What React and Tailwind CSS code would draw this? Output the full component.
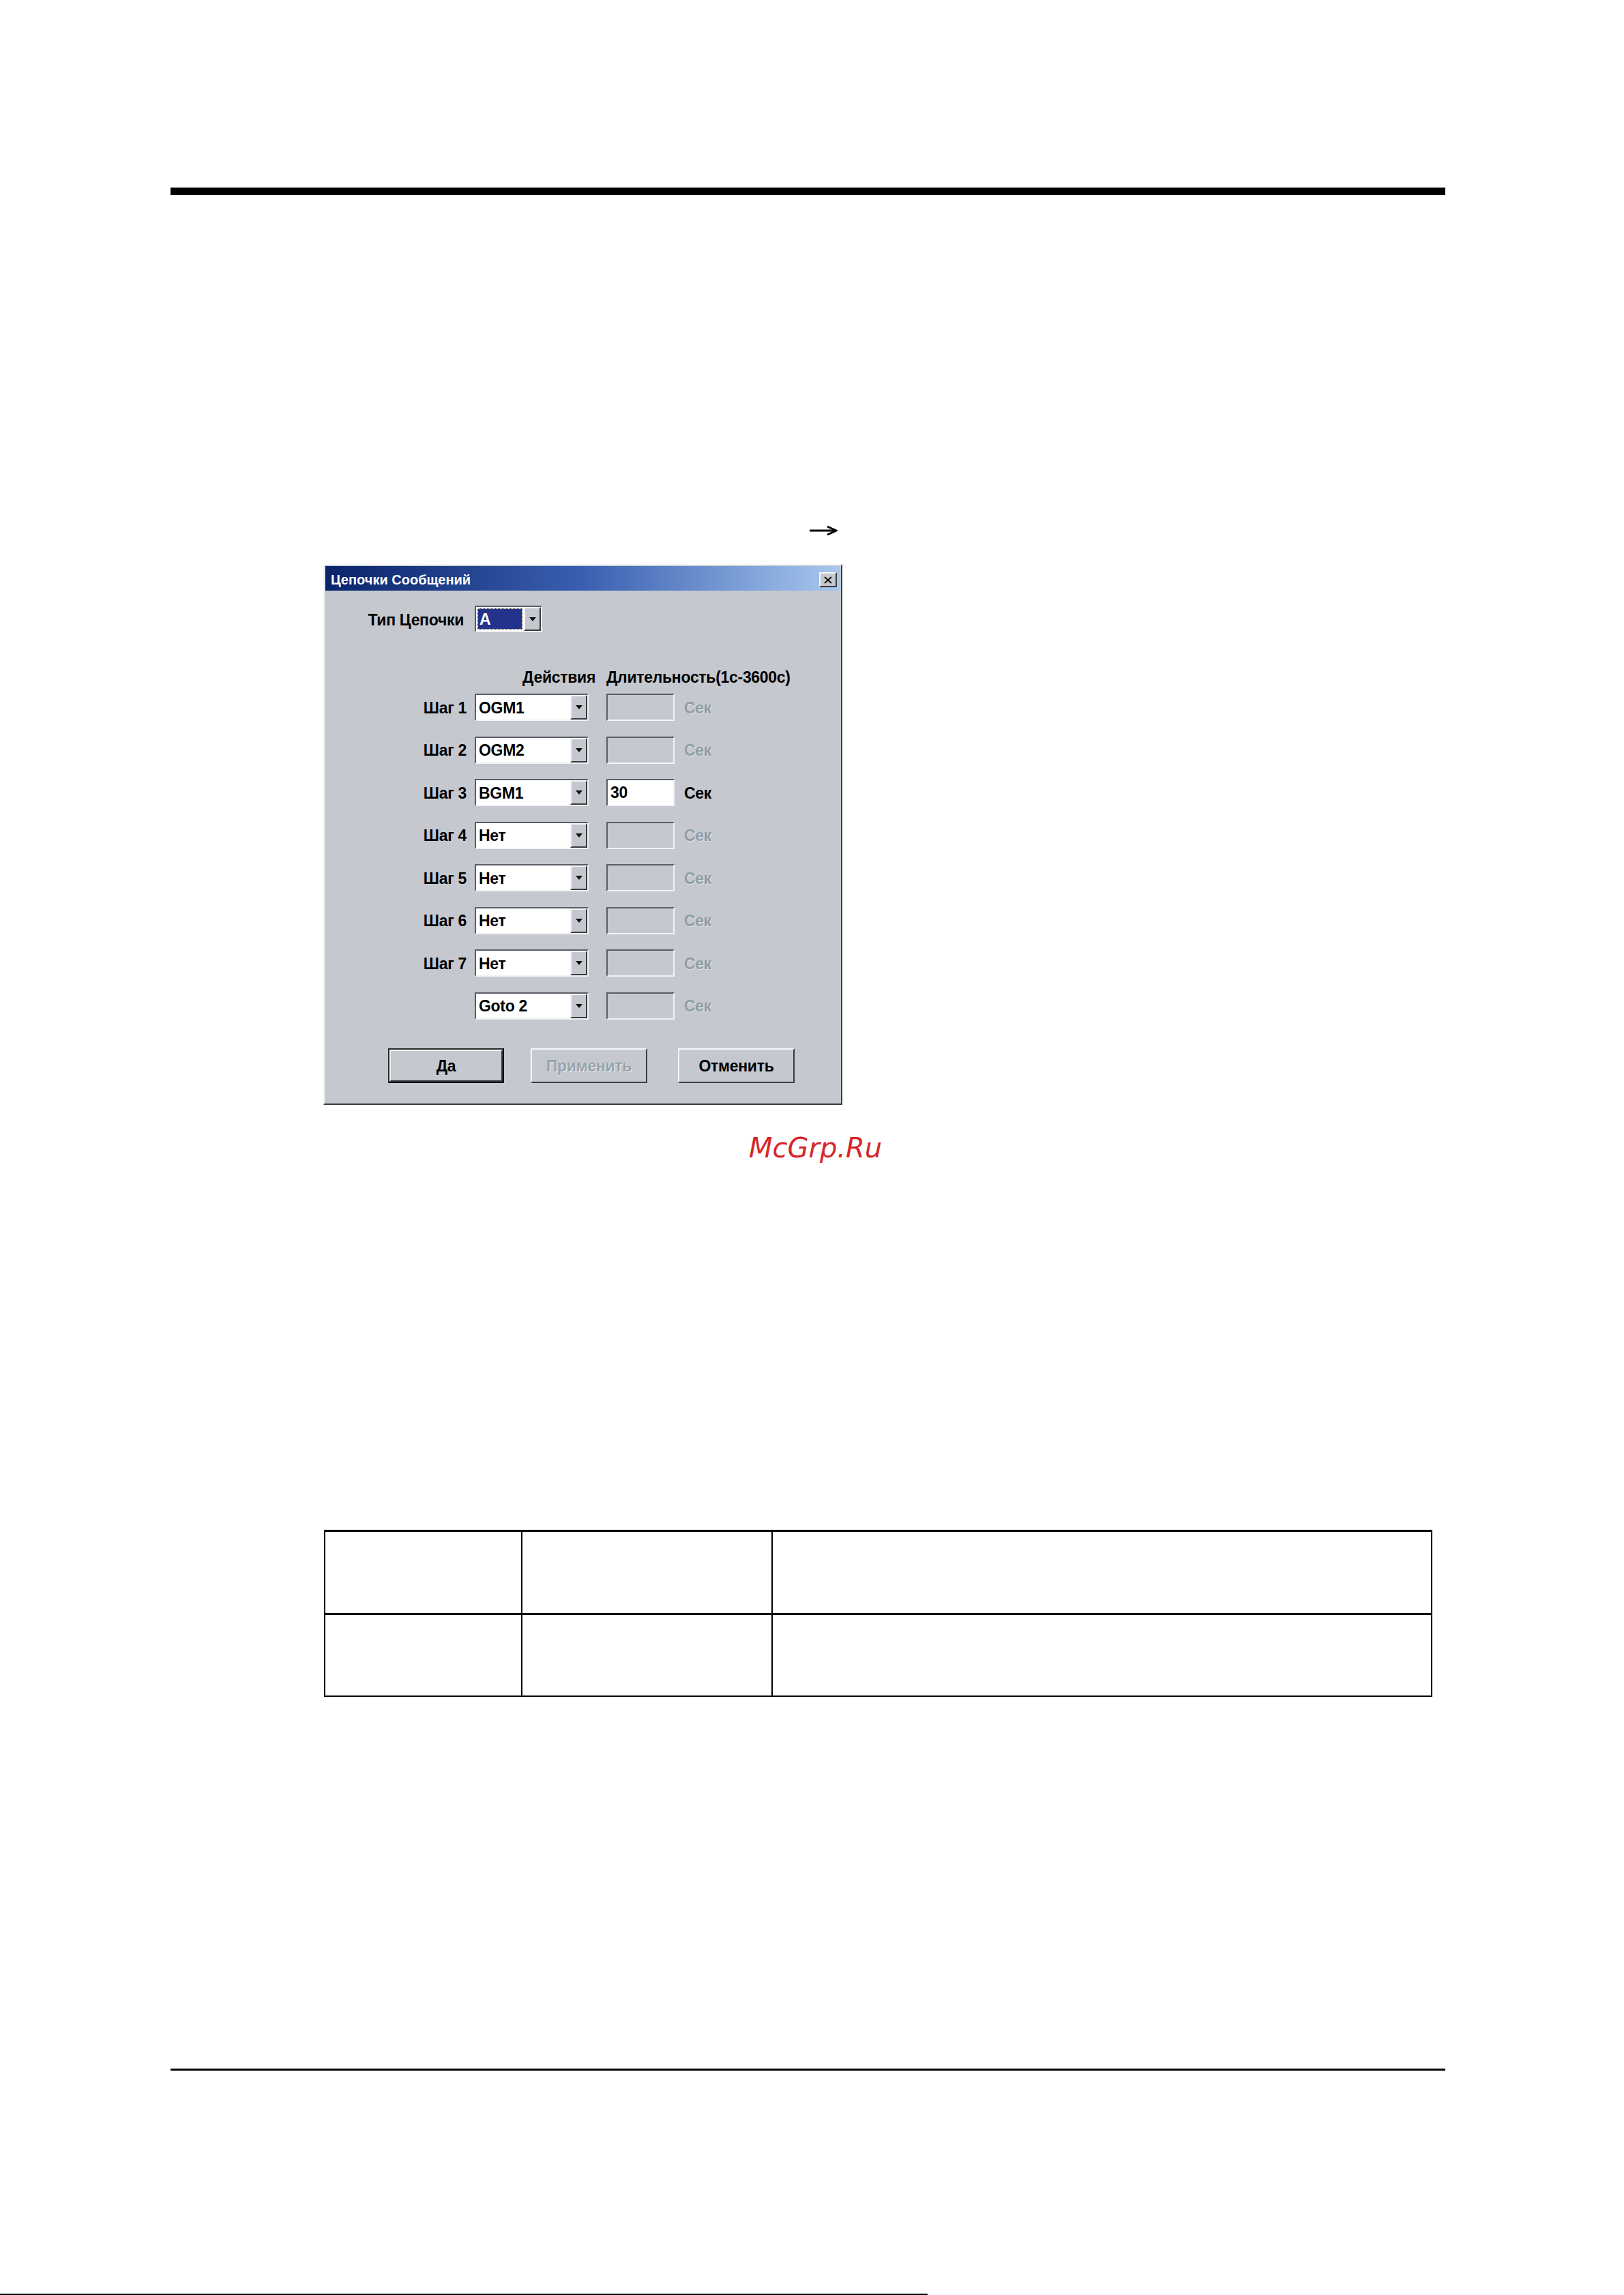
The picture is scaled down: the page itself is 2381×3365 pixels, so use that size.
import React from 'react';

const sunken = 'border-2 border-t-[#5a5e66] border-l-[#5a5e66] border-b-[#f1f2f4] border-r-[#f1f2f4]';
const raised = 'border-2 border-t-[#f4f5f7] border-l-[#f4f5f7] border-b-[#3a3c40] border-r-[#3a3c40]';
const uiText = 'text-[23px] font-bold leading-none tracking-[-0.3px]';

const steps = [
  { label: 'Шаг 1', action: 'OGM1' },
  { label: 'Шаг 2', action: 'OGM2' },
  { label: 'Шаг 3', action: 'BGM1', time: '30' },
  { label: 'Шаг 4', action: 'Нет' },
  { label: 'Шаг 5', action: 'Нет' },
  { label: 'Шаг 6', action: 'Нет' },
  { label: 'Шаг 7', action: 'Нет' },
  { label: '', action: 'Goto 2' },
];

function DropButton() {
  return (
    <div className={`flex h-full w-[25px] shrink-0 items-center justify-center bg-[#c5c8cf] ${raised}`}>
      <svg width="10" height="6" viewBox="0 0 10 6">
        <path d="M0 0 H10 L5 6 Z" fill="#111" />
      </svg>
    </div>
  );
}

function Combo({ value }) {
  return (
    <div className={`flex h-[40px] w-[167px] bg-white ${sunken}`}>
      <div className={`flex flex-1 items-center pl-[4px] pt-[2px] text-black ${uiText}`}>{value}</div>
      <DropButton />
    </div>
  );
}

function TimeBox({ value }) {
  return (
    <div
      className={`flex h-[40px] w-[100px] items-center pl-[4px] pt-[1px] text-black ${uiText} ${sunken} ${
        value ? 'bg-white' : 'bg-[#c5c8cf]'
      }`}
    >
      {value}
    </div>
  );
}

function DialogButton({ children, primary, disabled }) {
  if (primary) {
    return (
      <div className="h-[51px] w-[170px] border-[2px] border-black border-t-[#2a2a2a] border-l-[#2a2a2a]">
        <div className={`flex h-full w-full items-center justify-center bg-[#c5c8cf] pt-[2px] text-black ${uiText} ${raised}`}>
          {children}
        </div>
      </div>
    );
  }
  return (
    <div
      className={`flex h-[51px] w-[171px] items-center justify-center bg-[#c5c8cf] pt-[2px] ${uiText} ${raised} ${
        disabled ? 'text-[#97a4ab] [text-shadow:1px_1px_0_#eef0f3]' : 'text-black'
      }`}
    >
      {children}
    </div>
  );
}

function Dialog() {
  return (
    <div
      className={`ml-[474px] mt-[41px] flex h-[793px] w-[761px] flex-col bg-[#c5c8cf] p-[1px] font-['Liberation_Sans',Arial,sans-serif] ${raised}`}
    >
      {/* title bar */}
      <div className="flex h-[36px] shrink-0 items-center justify-between bg-gradient-to-r from-[#0a246a] via-[#3a5fb0] to-[#a9c8ee] pl-[8px] pr-[5px] pt-[4px]">
        <span className="text-[20px] font-bold leading-none text-white">Цепочки Сообщений</span>
        <div className={`flex h-[22px] w-[26px] items-center justify-center bg-[#c5c8cf] ${raised}`}>
          <svg width="12" height="11" viewBox="0 0 12 11">
            <path d="M1 1 L11 10 M11 1 L1 10" stroke="#111" strokeWidth="2" />
          </svg>
        </div>
      </div>

      {/* chain type */}
      <div className="mt-[22px] flex items-center">
        <div className={`w-[203px] pt-[4px] text-right text-black ${uiText}`}>Тип Цепочки</div>
        <div className={`ml-[16px] flex h-[39px] w-[99px] bg-white ${sunken}`}>
          <div className="flex flex-1 p-[2px]">
            <div className={`flex flex-1 items-center border border-dotted border-[#e8d27a] bg-[#23338c] pl-[2px] pt-[2px] text-white ${uiText}`}>
              A
            </div>
          </div>
          <DropButton />
        </div>
      </div>

      {/* header */}
      <div className={`mt-[54px] flex h-[24px] items-center text-black ${uiText}`}>
        <div className="w-[396px] text-right">Действия</div>
        <div className="ml-[16px]">Длительность(1с-3600с)</div>
      </div>

      {/* steps */}
      <div className="mt-[12px] flex flex-col gap-[22.57px]">
        {steps.map((s, i) => (
          <div key={i} className="flex h-[40px] items-center">
            <div className={`w-[207px] pt-[2px] text-right text-black ${uiText}`}>{s.label}</div>
            <div className="ml-[12px]">
              <Combo value={s.action} />
            </div>
            <div className="ml-[26px]">
              <TimeBox value={s.time} />
            </div>
            <div
              className={`ml-[14px] pt-[2px] ${uiText} ${
                s.time ? 'text-black' : 'text-[#8e9ea6] [text-shadow:1px_1px_0_#dfe3e7]'
              }`}
            >
              Сек
            </div>
          </div>
        ))}
      </div>

      {/* buttons */}
      <div className="mt-[42px] flex">
        <div className="ml-[92px]">
          <DialogButton primary>Да</DialogButton>
        </div>
        <div className="ml-[39px]">
          <DialogButton disabled>Применить</DialogButton>
        </div>
        <div className="ml-[45px]">
          <DialogButton>Отменить</DialogButton>
        </div>
      </div>
    </div>
  );
}

export default function App() {
  return (
    <div className="flex h-[3365px] w-[2381px] flex-col overflow-hidden bg-white pt-[275px]">
      <div className="ml-[250px] h-[11px] w-[1869px] bg-black" />

      <div className="ml-[1186px] mt-[484px] h-[16px] w-[42px]">
        <svg width="42" height="16" viewBox="0 0 42 16">
          <path d="M1 8 H39" stroke="#000" strokeWidth="3" />
          <path d="M27 2 L40 8 L27 14" stroke="#000" strokeWidth="3" fill="none" />
        </svg>
      </div>

      <Dialog />

      <div className="ml-[1098px] mt-[39px] font-['DejaVu_Sans',sans-serif] text-[40px] italic leading-[48px] text-[#d7262b]">
        McGrp.Ru
      </div>

      <div className="ml-[475px] mt-[536px] w-[1625px] border-x-2 border-t-[3px] border-b-2 border-black">
        <div className="grid h-[122px] grid-cols-[289px_367px_1fr] border-b-[3px] border-black">
          <div className="border-r-2 border-black" />
          <div className="border-r-2 border-black" />
          <div />
        </div>
        <div className="grid h-[118px] grid-cols-[289px_367px_1fr]">
          <div className="border-r-2 border-black" />
          <div className="border-r-2 border-black" />
          <div />
        </div>
      </div>

      <div className="ml-[250px] mt-[545px] h-[3px] w-[1869px] bg-black" />

      <div className="mt-[327px] h-[2px] w-[1360px] bg-black" />
    </div>
  );
}
